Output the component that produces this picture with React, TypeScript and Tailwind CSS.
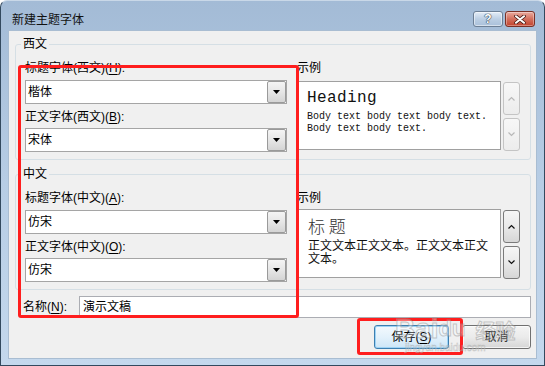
import React from 'react';

const ui = "font-['Liberation_Sans','Noto_Sans_CJK_SC',sans-serif]";

function Caret() {
  return (
    <svg width="7" height="4" viewBox="0 0 7 4">
      <path d="M0 0h7L3.5 4z" fill="#000" />
    </svg>
  );
}

function Combo({ value }: { value: string }) {
  return (
    <div className="flex h-[24px] w-[262px] items-stretch border border-[#a5a5a5] bg-white">
      <span className="flex flex-1 items-center pl-[2px] text-[12px] leading-none">{value}</span>
      <div className="flex w-[19px] items-center justify-center rounded-[2px] border border-[#9a9a9a] bg-linear-to-b from-[#f4f4f4] via-[#e6e6e6] to-[#d4d4d4]">
        <Caret />
      </div>
    </div>
  );
}

function Chevron({ up, color }: { up: boolean; color: string }) {
  return (
    <svg width="7" height="5" viewBox="0 0 7 5">
      <path d={up ? 'M0.5 4.5L3.5 1.5L6.5 4.5' : 'M0.5 0.5L3.5 3.5L6.5 0.5'} fill="none" stroke={color} strokeWidth="1.2" />
    </svg>
  );
}

function Spin({ enabled }: { enabled: boolean }) {
  const cls = enabled
    ? 'border-[#7a7a7a] bg-linear-to-b from-[#f6f6f6] via-[#e9e9e9] to-[#d6d6d6]'
    : 'border-[#c4c4c4] bg-linear-to-b from-[#f7f7f7] to-[#ececec]';
  const c = enabled ? '#111' : '#b8b8b8';
  return (
    <div className="mt-[1px] flex w-[17px] flex-col gap-[3px]">
      <div className={`flex h-[33px] items-center justify-center rounded-[3px] border ${cls}`}>
        <Chevron up color={c} />
      </div>
      <div className={`flex h-[33px] items-center justify-center rounded-[3px] border ${cls}`}>
        <Chevron up={false} color={c} />
      </div>
    </div>
  );
}

function Label({ text, hot }: { text: string; hot: string }) {
  return (
    <div className="h-[16px] text-[12px] leading-[16px]">
      {text}(<span className="underline underline-offset-2">{hot}</span>):
    </div>
  );
}

function Group({
  title,
  label1,
  hot1,
  value1,
  label2,
  hot2,
  value2,
  sample,
  boxGap,
  enabled,
}: {
  title: string;
  label1: string;
  hot1: string;
  value1: string;
  label2: string;
  hot2: string;
  value2: string;
  sample: React.ReactNode;
  boxGap: string;
  enabled: boolean;
}) {
  return (
    <fieldset className="ml-[6px] w-[516px] rounded-[3px] border border-[#d5dfe5]">
      <legend className="ml-[5px] px-[2px] text-[12px] leading-[14px]">{title}</legend>
      <div className="flex gap-[10px] px-[9px] pt-[9px] pb-[7px]">
        <div className="flex w-[262px] flex-col">
          <Label text={label1} hot={hot1} />
          <div className="mt-[4px]">
            <Combo value={value1} />
          </div>
          <div className="mt-[5px]">
            <Label text={label2} hot={hot2} />
          </div>
          <div className="mt-[3px]">
            <Combo value={value2} />
          </div>
        </div>
        <div className="flex flex-col">
          <div className="h-[16px] text-[12px] leading-[16px]">示例</div>
          <div className={`flex gap-[2px] ${boxGap}`}>
            <div className="h-[69px] w-[204px] border border-[#a0a0a0] bg-white">{sample}</div>
            <Spin enabled={enabled} />
          </div>
        </div>
      </div>
    </fieldset>
  );
}

export default function App() {
  return (
    <div
      className={`relative flex h-[366px] w-[545px] flex-col overflow-hidden rounded-t-[7px] border border-[#33495e] border-t-[#c9d8e8] bg-linear-to-b from-[#a3bbd6] via-[#b7cde5] to-[#c4d8ed] text-black ${ui}`}
    >
      {/* title bar */}
      <div className="flex h-[29px] shrink-0 items-start pl-[11px] pr-[9px]">
        <span className="pt-[11px] text-[12px] leading-[16px] text-[#111]">新建主题字体</span>
        <div className="ml-auto mt-[10px] flex gap-[2px]">
          <div className="flex h-[16px] w-[30px] items-center justify-center rounded-[3px] border border-[#6c7f95] bg-linear-to-b from-[#e4edf7] via-[#bccfe4] to-[#a9c0da] shadow-[inset_0_0_0_1px_rgba(255,255,255,0.5)]">
            <span className="text-[12px] font-bold leading-none text-white [text-shadow:0_0_1px_#2d3d50,0_0_1px_#2d3d50,0_0_1px_#2d3d50]">?</span>
          </div>
          <div className="flex h-[16px] w-[30px] items-center justify-center rounded-[3px] border border-[#7a3026] bg-linear-to-b from-[#e9ab9f] via-[#d36f5d] to-[#c2412c] shadow-[inset_0_0_0_1px_rgba(255,255,255,0.35)]">
            <svg width="12" height="9" viewBox="0 0 12 9">
              <path d="M2 1.2L10 7.8M10 1.2L2 7.8" stroke="#4a1e18" strokeWidth="3.6" strokeLinecap="round" />
              <path d="M2 1.2L10 7.8M10 1.2L2 7.8" stroke="#fff" strokeWidth="2" strokeLinecap="round" />
            </svg>
          </div>
        </div>
      </div>

      {/* client area */}
      <div className="mx-[7px] flex h-[329px] shrink-0 flex-col border border-[#a9bdd2] bg-[#f0f0f0]">
        <div className="mt-[6px]">
          <Group
            title="西文"
            label1="标题字体(西文)"
            hot1="H"
            value1="楷体"
            label2="正文字体(西文)"
            hot2="B"
            value2="宋体"
            boxGap="mt-[5px]"
            enabled={false}
            sample={
              <div className="pl-[9px] pt-[6px] font-['Liberation_Mono',monospace] text-[#111]">
                <div className="text-[16px] leading-[20px] tracking-[0.4px]">Heading</div>
                <div className="mt-[3px] text-[10px] leading-[12px]">Body text body text body text.</div>
                <div className="text-[10px] leading-[12px]">Body text body text.</div>
              </div>
            }
          />
        </div>
        <div className="mt-[7px]">
          <Group
            title="中文"
            label1="标题字体(中文)"
            hot1="A"
            value1="仿宋"
            label2="正文字体(中文)"
            hot2="O"
            value2="仿宋"
            boxGap="mt-[3px]"
            enabled
            sample={
              <div className="pl-[10px] pt-[5px] font-['Noto_Sans_CJK_SC',sans-serif]">
                <div className="text-[17px] leading-[22px] font-light text-[#333]">标 题</div>
                <div className="mt-[1px] text-[12px] leading-[13px] text-[#111]">正文文本正文文本。正文文本正文</div>
                <div className="text-[12px] leading-[13px] text-[#111]">文本。</div>
              </div>
            }
          />
        </div>

        {/* name row */}
        <div className="mt-[6px] flex h-[22px] items-center pl-[14px]">
          <span className="w-[56px] text-[12px] leading-[16px]">
            名称(<span className="underline underline-offset-2">N</span>):
          </span>
          <div className="flex h-[22px] w-[452px] items-center border border-[#abadb3] bg-white pl-[3px] text-[12px]">演示文稿</div>
        </div>

        {/* buttons */}
        <div className="mt-[7px] flex justify-end gap-[13px] pr-[5px]">
          <div className="flex h-[24px] w-[75px] items-center justify-center rounded-[3px] border border-[#3c7fb1] bg-linear-to-b from-[#f3f9fd] via-[#e3f1fb] to-[#cde6f7] text-[12px] shadow-[inset_0_0_0_1px_#9fd3f5]">
            保存(<span className="underline underline-offset-2">S</span>)
          </div>
          <div className="flex h-[24px] w-[69px] items-center justify-center rounded-[3px] border border-[#707070] bg-linear-to-b from-[#f4f4f4] via-[#ebebeb] to-[#d6d6d6] text-[12px] shadow-[inset_0_0_0_1px_rgba(255,255,255,0.7)]">
            取消
          </div>
        </div>
      </div>

      {/* red annotation boxes */}
      <div className="pointer-events-none absolute left-[17px] top-[64px] h-[253px] w-[281px] rounded-[3px] border-[3px] border-[#ff1e1e]" />
      <div className="pointer-events-none absolute left-[356px] top-[317px] h-[37px] w-[106px] rounded-[3px] border-[3px] border-[#ff1e1e]" />

      {/* watermark */}
      <div className="pointer-events-none absolute left-[394px] top-[315px] flex flex-col items-start opacity-50">
        <span className="flex items-end font-['Liberation_Sans',sans-serif] text-[28px] font-bold leading-[26px] text-white/70 [-webkit-text-stroke:1px_#9a9a9a]">
          Bai<span className="text-[22px]">du</span>
          <span className="ml-[10px] font-['Noto_Sans_CJK_SC',sans-serif] text-[20px] leading-[22px]">经验</span>
        </span>
        <span className="ml-[10px] mt-[1px] text-[10px] leading-[10px] text-white [-webkit-text-stroke:0.5px_#999]">jingyan.baidu.com</span>
      </div>
    </div>
  );
}
